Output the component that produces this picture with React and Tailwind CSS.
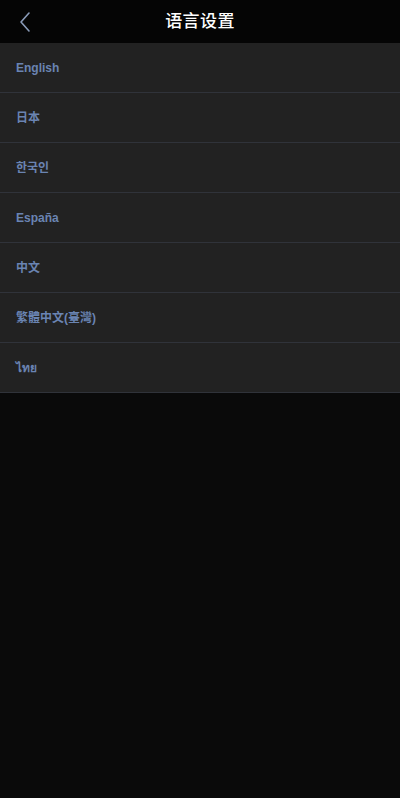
import React from 'react';

const languages = ['English', '日本', '한국인', 'España', '中文', '繁體中文(臺灣)', 'ไทย'];

const App = () => {
    return (
        <div
            className="min-h-[798px] bg-[#0a0a0a]"
            style={{ fontFamily: '"Liberation Sans", Arial, "Noto Sans CJK SC", "Noto Sans", sans-serif' }}
        >
            {/* Header */}
            <header className="relative h-[43px] bg-[#050505] flex items-center justify-center">
                <button className="absolute left-[14px] top-[7px] p-1 text-[#8a9bb8]">
                    <svg width="14" height="22" viewBox="0 0 14 22" fill="none">
                        <path d="M11 2 L3 11 L11 20" stroke="currentColor" strokeWidth="1.6" strokeLinecap="round" strokeLinejoin="round" />
                    </svg>
                </button>
                <h1 className="text-white text-[17px] font-medium tracking-wide">语言设置</h1>
            </header>

            {/* Language list */}
            <ul>
                {languages.map((lang) => (
                    <li
                        key={lang}
                        className="h-[50px] bg-[#222222] border-b border-[#30333a] flex items-center px-4 pt-[1px] text-[12px] font-bold text-[#6a84b2]"
                    >
                        {lang}
                    </li>
                ))}
            </ul>
        </div>
    );
};

export default App;
